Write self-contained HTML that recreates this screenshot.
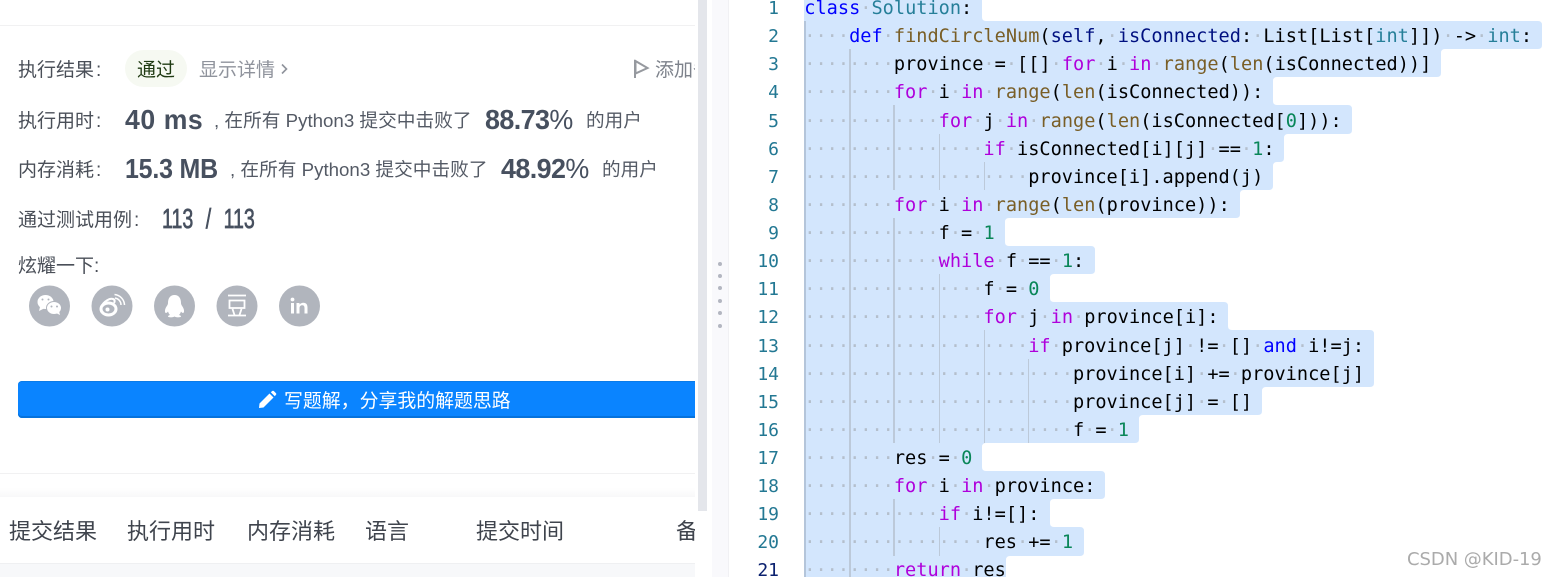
<!DOCTYPE html>
<html lang="zh"><head><meta charset="utf-8"><title>Solution</title>
<style>
html,body{margin:0;padding:0;background:#fff}
body{width:1556px;height:577px;position:relative;overflow:hidden;font-family:"Liberation Sans","Noto Sans CJK SC",sans-serif;color:#3d4450}
.a{position:absolute;white-space:nowrap}
.t{font-size:19px;line-height:26px;color:#4a4f58;margin-top:2px}
.t u{text-decoration:none;margin-left:2px}
.s{font-size:18.7px;line-height:26px;color:#545a65;margin-top:1px}
.n{font-size:28px;line-height:34px;color:#47505f;font-weight:bold;transform-origin:0 50%}
#left{position:absolute;left:0;top:0;width:695px;height:577px;overflow:hidden}
.ln{position:absolute;left:739px;width:40px;text-align:right;font:18px/28px "DejaVu Sans Mono",monospace;color:#237893;margin-top:1.500px}
.c{position:absolute;left:804.300px;height:28px;font:18.6px/28px "DejaVu Sans Mono",monospace;color:#000;white-space:pre;margin-top:2px}
.c i{font-style:normal;color:#b4bfcc}
.k{color:#00f}.p{color:#af00db}.y{color:#267f99}.f{color:#795e26}.v{color:#001080}.d{color:#098658}
.g{position:absolute;width:1.5px;background:#bcc9d9}
.h{position:absolute;left:718px;width:4px;height:4px;border-radius:2px;background:#b3b6c1}
</style></head><body>

<div id="left">
  <div class="a" style="left:0;top:25px;width:695px;height:1px;background:#f1f1f2"></div>
  <div class="a t" style="left:18px;top:56px">执行结果<u>:</u></div>
  <div class="a" style="left:125px;top:50px;width:62px;height:37px;border-radius:19px;background:#f6f9f2"></div>
  <div class="a" style="left:137px;top:58px;font-size:19px;line-height:26px;color:#1f3a12">通过</div>
  <div class="a" style="left:199px;top:58px;font-size:19px;line-height:26px;color:#8f939c">显示详情</div>
  <svg class="a" style="left:279px;top:62px" width="10" height="14" viewBox="0 0 10 14"><path d="M3 2.5 L7.5 7 L3 11.5" fill="none" stroke="#8f939c" stroke-width="1.6"/></svg>
  <svg class="a" style="left:632px;top:58px" width="18" height="22" viewBox="0 0 18 22"><path d="M3 2 V20 M3.5 3 L15.5 10 L3.5 15.5 Z" fill="none" stroke="#96999f" stroke-width="2"/></svg>
  <div class="a" style="left:655px;top:58px;font-size:19px;line-height:26px;color:#7d828b;width:42px;overflow:hidden">添加备注</div>

  <div class="a t" style="left:18px;top:107px">执行用时<u>:</u></div>
  <div class="a n" style="left:125px;top:103px;letter-spacing:.6px;transform:scaleX(.95)">40 ms</div>
  <div class="a s" style="left:214px;top:107px">, 在所有 Python3 提交中击败了</div>
  <div class="a n" style="left:485px;top:103px;letter-spacing:-.6px;transform:scaleX(.96)">88.73<span style="font-weight:normal">%</span></div>
  <div class="a s" style="left:586px;top:107px;font-size:18.6px">的用户</div>

  <div class="a t" style="left:18px;top:156px">内存消耗<u>:</u></div>
  <div class="a n" style="left:125px;top:152px;letter-spacing:-.2px;transform:scaleX(.89)">15.3 MB</div>
  <div class="a s" style="left:230px;top:156px">, 在所有 Python3 提交中击败了</div>
  <div class="a n" style="left:501px;top:152px;letter-spacing:-.6px;transform:scaleX(.96)">48.92<span style="font-weight:normal">%</span></div>
  <div class="a s" style="left:602px;top:156px;font-size:18.6px">的用户</div>

  <div class="a t" style="left:18px;top:206px">通过测试用例<u>:</u></div>
  <div class="a n" style="left:162px;top:202px;font-weight:normal;-webkit-text-stroke:.7px #47505f;transform:scaleX(.7);word-spacing:10px">113 / 113</div>

  <div class="a t" style="left:18px;top:252px">炫耀一下:</div>

  <svg class="a" style="left:0;top:280px" width="340" height="52" viewBox="0 280 340 52">
    <g fill="#b1b5bd">
      <circle cx="49.5" cy="306" r="20.5"/><circle cx="112" cy="306" r="20.5"/><circle cx="174.5" cy="306" r="20.5"/><circle cx="237" cy="306" r="20.5"/><circle cx="299.5" cy="306" r="20.5"/>
    </g>
    <g fill="#fff">
      <ellipse cx="45.5" cy="302" rx="8" ry="7"/><path d="M40 307 L39 311 L45 308Z"/>
      <ellipse cx="54" cy="308" rx="7.5" ry="6.5" stroke="#b1b5bd" stroke-width="1"/><path d="M56 313 L60 315 L59 311Z"/>
    </g>
    <g fill="#b1b5bd"><circle cx="42.5" cy="299.5" r="1"/><circle cx="48.5" cy="299.5" r="1"/><circle cx="51.5" cy="306.5" r="1"/><circle cx="57" cy="306.5" r="1"/></g>
    <ellipse cx="108.5" cy="309" rx="7.5" ry="6" fill="none" stroke="#fff" stroke-width="3"/>
    <path d="M101 307 C104 301 110 298 113 299 C116 300 114 303 114 303" fill="none" stroke="#fff" stroke-width="2"/>
    <circle cx="107.5" cy="309.5" r="2" fill="#fff"/>
    <path d="M115 298 A7 7 0 0 1 121 305 M114.500 294.500 A11 11 0 0 1 124.500 305" fill="none" stroke="#fff" stroke-width="1.500"/>
    <path fill="#fff" d="M174.500 295 C170 295 168 298.500 168 303 C168 305 166.500 306 165.500 308.500 C164.500 311 165 313 166 313 C167 313 168 311.500 168 311.500 C168.500 313 169 314 170 315 C168 315.500 167.500 316.500 168.500 317 C170.500 317.500 173 317.500 174.500 316.500 C176 317.500 178.500 317.500 180.500 317 C181.500 316.500 181 315.500 179 315 C180 314 180.500 313 181 311.500 C181 311.500 182 313 183 313 C184 313 184.500 311 183.500 308.500 C182.500 306 181 305 181 303 C181 298.500 179 295 174.500 295Z"/>
    <g fill="none" stroke="#fff" stroke-width="1.800">
      <path d="M228 295.500 H246 M228 315.500 H246 M229.500 300.500 H244.500 V308 H229.500 Z M232.500 309 L234.500 315 M241.500 309 L239.500 315"/>
    </g>
    <g fill="#fff">
      <circle cx="292.500" cy="299.500" r="1.900"/><rect x="291" y="303" width="3" height="10.500"/>
      <path d="M296.500 303 H299.500 V304.500 C300.500 303.300 302 302.700 303.300 302.700 C306.300 302.700 307.500 304.500 307.500 307.500 V313.500 H304.500 V308 C304.500 306.300 303.800 305.300 302.300 305.300 C300.700 305.300 299.500 306.300 299.500 308.200 V313.500 H296.500 Z"/>
    </g>
  </svg>

  <div class="a" style="left:18px;top:381px;width:690px;height:37px;border-radius:4px;background:#0a84ff;box-shadow:inset 0 -2px 0 #0672dc,inset 0 1px 0 #0a7be8"></div>
  <svg class="a" style="left:258px;top:390px" width="19" height="19" viewBox="0 0 19 19"><path fill="#fff" d="M1 18 L1.500 13.500 L11.500 3.500 L15.500 7.500 L5.500 17.500 Z M12.800 2.200 L14.200 1 C14.700 .6 15.300 .6 15.800 1 L18 3.200 C18.400 3.700 18.400 4.300 18 4.800 L16.800 6.200 Z"/></svg>
  <div class="a" style="left:284px;top:389px;font-size:18.9px;line-height:26px;color:#fff">写题解，分享我的解题思路</div>

  <div class="a" style="left:0;top:473px;width:695px;height:1px;background:#f1f1f2"></div>
  <div class="a" style="left:0;top:488px;width:695px;height:9px;background:linear-gradient(#fff,#f8f8f9)"></div>
  <div class="a" style="left:0;top:563px;width:695px;height:14px;background:#f7f8fa;border-top:1px solid #eff0f2;box-sizing:border-box"></div>
  <div class="a" style="left:9px;top:518px;font-size:22px;line-height:28px;color:#3f444d">提交结果</div>
  <div class="a" style="left:127px;top:518px;font-size:22px;line-height:28px;color:#3f444d">执行用时</div>
  <div class="a" style="left:247px;top:518px;font-size:22px;line-height:28px;color:#3f444d">内存消耗</div>
  <div class="a" style="left:365px;top:518px;font-size:22px;line-height:28px;color:#3f444d">语言</div>
  <div class="a" style="left:476px;top:518px;font-size:22px;line-height:28px;color:#3f444d">提交时间</div>
  <div class="a" style="left:676px;top:518px;font-size:22px;line-height:28px;color:#3f444d">备注</div>
</div>

<div class="a" style="left:698px;top:0;width:9px;height:511px;background:#e4e6eb"></div>
<div class="a" style="left:712px;top:0;width:16px;height:577px;background:#f9f9fc;border-right:1px solid #f1f1f4"></div>
<div class="h" style="top:262px"></div><div class="h" style="top:274px"></div><div class="h" style="top:286px"></div><div class="h" style="top:299px"></div><div class="h" style="top:311px"></div><div class="h" style="top:324px"></div>

<svg class="a" style="left:0;top:0" width="1556" height="577" viewBox="0 0 1556 577">
<path fill="#d3e6fd" d="M804 0 H982 V17 Q982 21 986 21 H1538 Q1542 21 1542 25 V45 Q1542 49 1538 49 H1445 Q1441 49 1441 53 V73 Q1441 77 1437 77 H1277 Q1273 77 1273 81 V101 Q1273 105 1277 105 H1348 Q1352 105 1352 109 V130 Q1352 134 1348 134 H1288 Q1284 134 1284 138 V158 Q1284 162 1280 162 H1277 Q1273 162 1273 166 V186 Q1273 190 1269 190 H1244 Q1240 190 1240 194 V214 Q1240 218 1236 218 H1009 Q1005 218 1005 222 V242 Q1005 246 1009 246 H1091 Q1095 246 1095 250 V270 Q1095 274 1091 274 H1054 Q1050 274 1050 278 V298 Q1050 302 1054 302 H1224 Q1228 302 1228 306 V326 Q1228 330 1232 330 H1370 Q1374 330 1374 334 V383 Q1374 387 1370 387 H1266 Q1262 387 1262 391 V411 Q1262 415 1258 415 H1143 Q1139 415 1139 419 V439 Q1139 443 1135 443 H986 Q982 443 982 447 V467 Q982 471 986 471 H1101 Q1105 471 1105 475 V495 Q1105 499 1101 499 H1054 Q1050 499 1050 503 V523 Q1050 527 1054 527 H1080 Q1084 527 1084 531 V552 Q1084 556 1080 556 H1010 Q1006 556 1006 560 V577 H804 Z"/>
</svg>

<div class="g" style="left:804px;top:21px;height:556px;width:2px;background:#b4c5da"></div>
<div class="g" style="left:849px;top:49px;height:528px"></div>
<div class="g" style="left:893px;top:105px;height:85px"></div>
<div class="g" style="left:893px;top:218px;height:225px"></div>
<div class="g" style="left:893px;top:499px;height:57px"></div>
<div class="g" style="left:938.500px;top:134px;height:56px"></div>
<div class="g" style="left:938.500px;top:274px;height:169px"></div>
<div class="g" style="left:938.500px;top:527px;height:29px"></div>
<div class="g" style="left:983.500px;top:162px;height:28px"></div>
<div class="g" style="left:983.500px;top:330px;height:113px"></div>
<div class="g" style="left:1027.500px;top:359px;height:84px"></div>

<div class="ln" style="top:-7px">1</div><div class="ln" style="top:21px">2</div><div class="ln" style="top:49px">3</div><div class="ln" style="top:77px">4</div><div class="ln" style="top:106px">5</div><div class="ln" style="top:134px">6</div><div class="ln" style="top:162px">7</div><div class="ln" style="top:190px">8</div><div class="ln" style="top:218px">9</div><div class="ln" style="top:246px">10</div><div class="ln" style="top:274px">11</div><div class="ln" style="top:302px">12</div><div class="ln" style="top:331px">13</div><div class="ln" style="top:359px">14</div><div class="ln" style="top:387px">15</div><div class="ln" style="top:415px">16</div><div class="ln" style="top:443px">17</div><div class="ln" style="top:471px">18</div><div class="ln" style="top:499px">19</div><div class="ln" style="top:527px">20</div><div class="ln" style="top:555px;color:#0b216f">21</div>

<div class="c" style="top:-7px"><span class="k">class</span><i>·</i><span class="y">Solution</span>:</div>
<div class="c" style="top:21px"><i>····</i><span class="k">def</span><i>·</i><span class="f">findCircleNum</span>(<span class="v">self</span>,<i>·</i><span class="v">isConnected</span>:<i>·</i>List[List[<span class="y">int</span>]])<i>·</i>-&gt;<i>·</i><span class="y">int</span>:</div>
<div class="c" style="top:49px"><i>········</i>province<i>·</i>=<i>·</i>[[]<i>·</i><span class="p">for</span><i>·</i>i<i>·</i><span class="p">in</span><i>·</i><span class="f">range</span>(<span class="f">len</span>(isConnected))]</div>
<div class="c" style="top:77px"><i>········</i><span class="p">for</span><i>·</i>i<i>·</i><span class="p">in</span><i>·</i><span class="f">range</span>(<span class="f">len</span>(isConnected)):</div>
<div class="c" style="top:106px"><i>············</i><span class="p">for</span><i>·</i>j<i>·</i><span class="p">in</span><i>·</i><span class="f">range</span>(<span class="f">len</span>(isConnected[<span class="d">0</span>])):</div>
<div class="c" style="top:134px"><i>················</i><span class="p">if</span><i>·</i>isConnected[i][j]<i>·</i>==<i>·</i><span class="d">1</span>:</div>
<div class="c" style="top:162px"><i>····················</i>province[i].append(j)</div>
<div class="c" style="top:190px"><i>········</i><span class="p">for</span><i>·</i>i<i>·</i><span class="p">in</span><i>·</i><span class="f">range</span>(<span class="f">len</span>(province)):</div>
<div class="c" style="top:218px"><i>············</i>f<i>·</i>=<i>·</i><span class="d">1</span></div>
<div class="c" style="top:246px"><i>············</i><span class="p">while</span><i>·</i>f<i>·</i>==<i>·</i><span class="d">1</span>:</div>
<div class="c" style="top:274px"><i>················</i>f<i>·</i>=<i>·</i><span class="d">0</span></div>
<div class="c" style="top:302px"><i>················</i><span class="p">for</span><i>·</i>j<i>·</i><span class="p">in</span><i>·</i>province[i]:</div>
<div class="c" style="top:331px"><i>····················</i><span class="p">if</span><i>·</i>province[j]<i>·</i>!=<i>·</i>[]<i>·</i><span class="k">and</span><i>·</i>i!=j:</div>
<div class="c" style="top:359px"><i>························</i>province[i]<i>·</i>+=<i>·</i>province[j]</div>
<div class="c" style="top:387px"><i>························</i>province[j]<i>·</i>=<i>·</i>[]</div>
<div class="c" style="top:415px"><i>························</i>f<i>·</i>=<i>·</i><span class="d">1</span></div>
<div class="c" style="top:443px"><i>········</i>res<i>·</i>=<i>·</i><span class="d">0</span></div>
<div class="c" style="top:471px"><i>········</i><span class="p">for</span><i>·</i>i<i>·</i><span class="p">in</span><i>·</i>province:</div>
<div class="c" style="top:499px"><i>············</i><span class="p">if</span><i>·</i>i!=[]:</div>
<div class="c" style="top:527px"><i>················</i>res<i>·</i>+=<i>·</i><span class="d">1</span></div>
<div class="c" style="top:555px"><i>········</i><span class="p">return</span><i>·</i>res</div>

<div class="a" style="left:1407px;top:547px;font-family:'DejaVu Sans',sans-serif;font-size:18px;line-height:26px;color:#ababab;letter-spacing:-.05px">CSDN @KID-19</div>
</body></html>
